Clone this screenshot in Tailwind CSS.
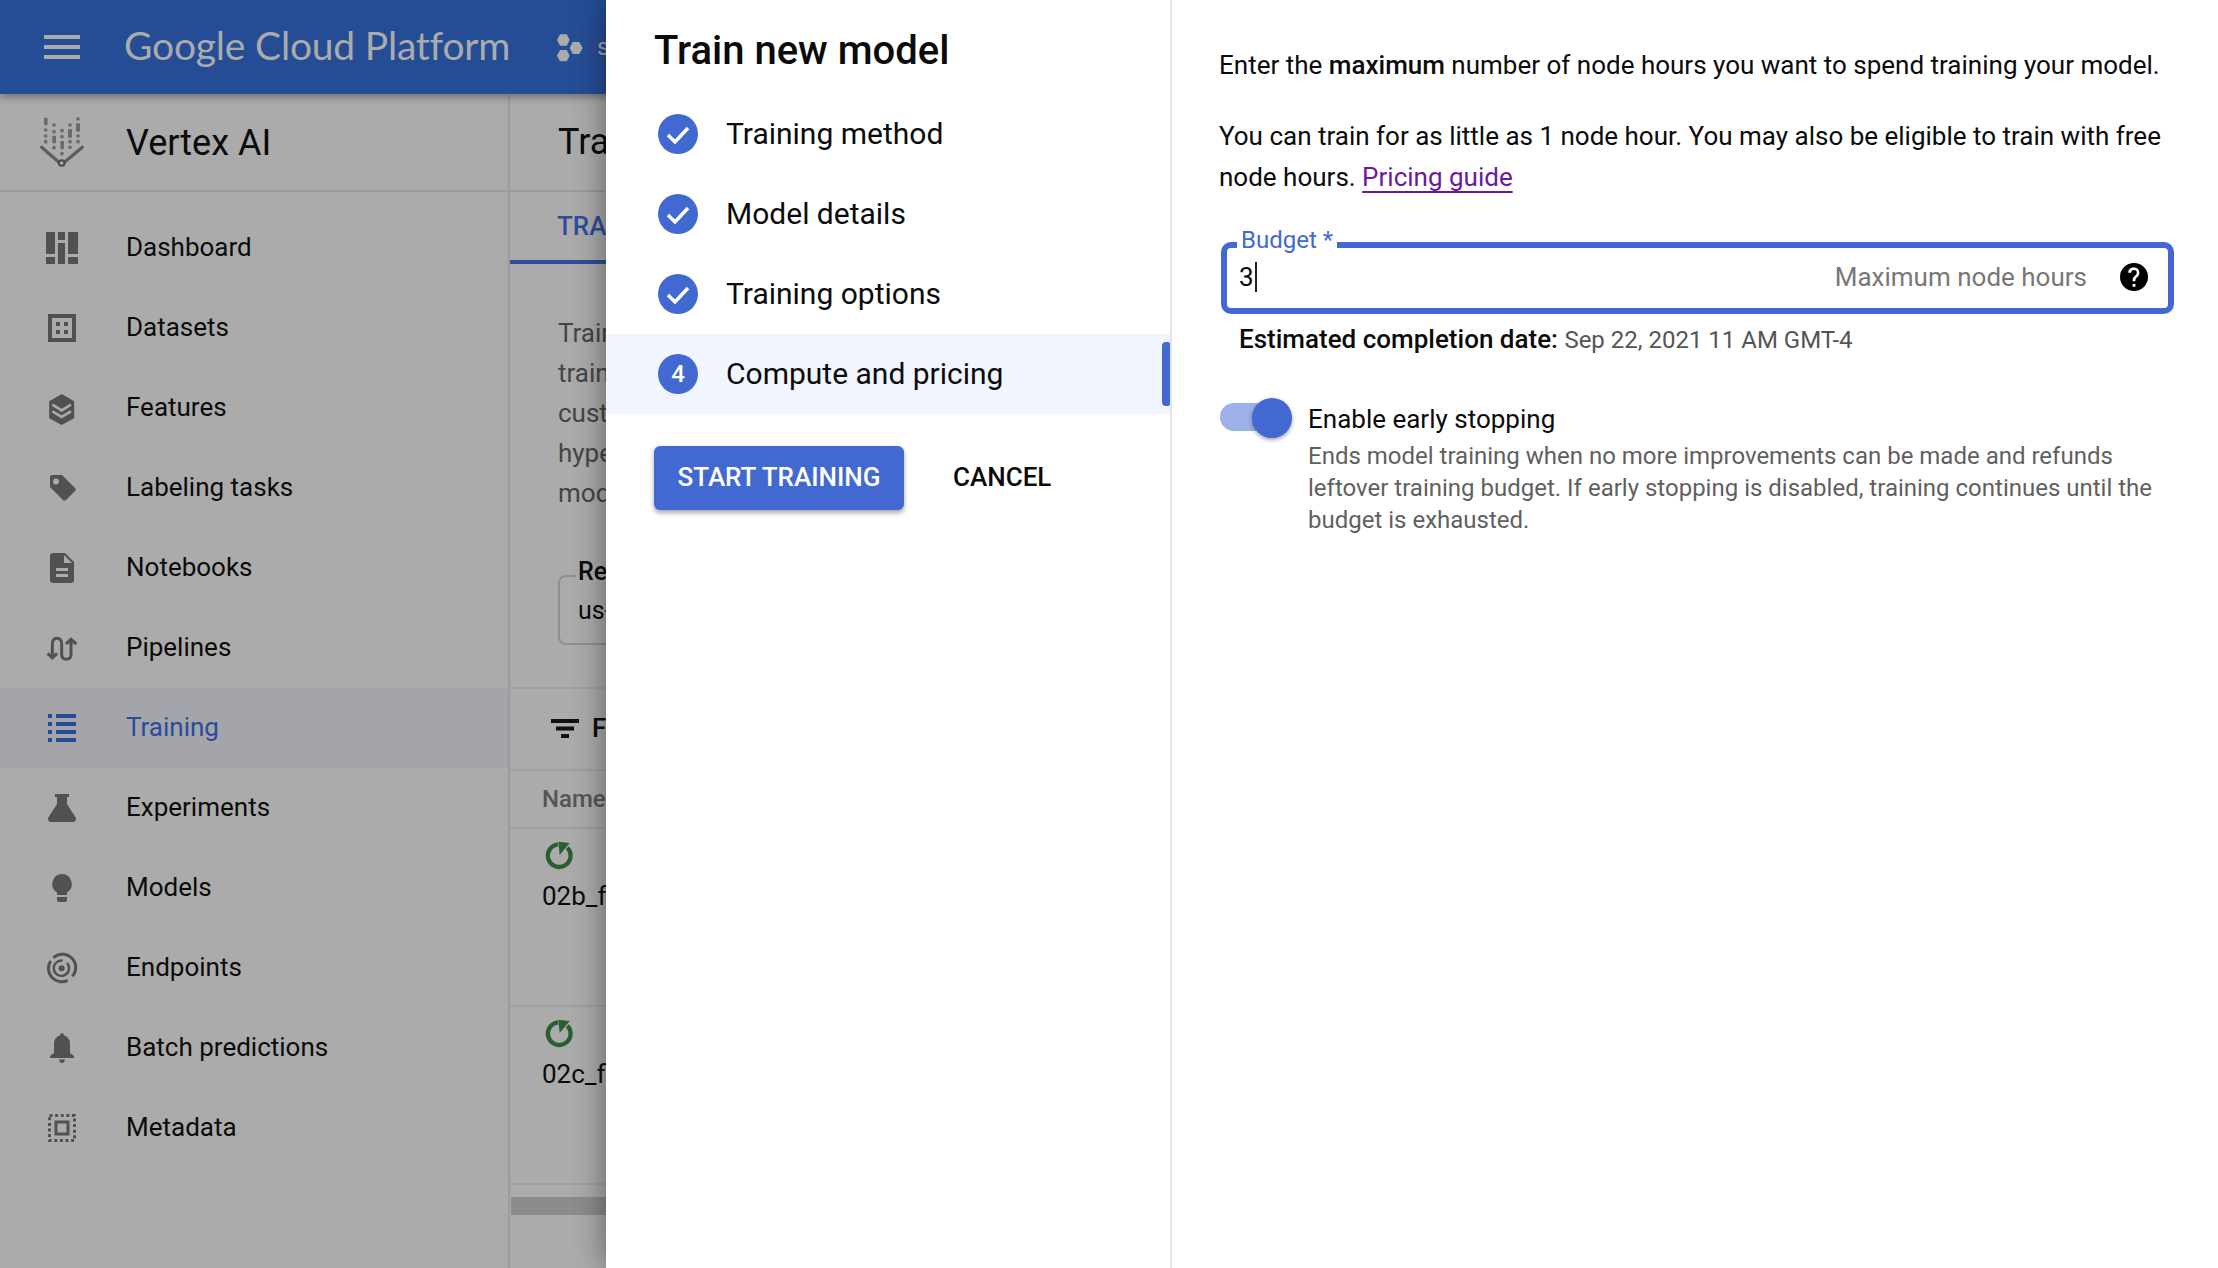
<!DOCTYPE html>
<html lang="en">

<head>
  <meta charset="UTF-8">
  <title>Vertex AI - Train new model</title>
  <script src="https://cdn.jsdelivr.net/npm/@tailwindcss/browser@4"></script>
</head>

<body class="relative w-[2218px] h-[1268px] overflow-hidden bg-[#ababab] font-[Roboto,sans-serif] text-[#0b0b0b]">

  <!-- Top bar -->
  <header class="relative z-10 h-[94px] bg-[#254d96] shadow-[0_3px_8px_rgba(0,0,0,0.35)] flex items-center text-[#ababab]">
    <svg class="ml-[44px] w-[36px] h-[24px] shrink-0" viewBox="0 0 36 24" fill="#ababab">
      <rect width="36" height="4" /><rect y="10" width="36" height="4" /><rect y="20" width="36" height="4" />
    </svg>
    <span class="ml-[44px] mb-[3px] w-[386px] shrink-0 text-[39px] font-[Lato,sans-serif] tracking-[-0.2px] whitespace-nowrap">Google Cloud Platform</span>
    <svg class="ml-[30px] w-[66px] h-[55px] shrink-0" viewBox="0 0 198 165" fill="#ababab">
      <polygon points="51,60 60,43 80,43 89,60 80,77 60,77" />
      <polygon points="89,84 98,66 118,66 128,84 118,102 98,102" />
      <polygon points="51,107 60,90 80,90 89,107 80,124 60,124" />
    </svg>
    <span class="-ml-[9px] text-[24px]">s</span>
  </header>

  <div class="flex h-[1174px]">
    <!-- Sidebar -->
    <aside class="w-[510px] shrink-0 border-r-2 border-[#9c9c9c]">
      <div class="h-[98px] border-b-2 border-[#9c9c9c] flex items-center pl-[30px]">
        <svg class="-mt-[4px] w-[70px] h-[70px] shrink-0" viewBox="0 0 210 210" fill="#6a6a6a">
          <rect x="42" y="38" width="11" height="23" rx="3" /><circle cx="47" cy="75" r="5.500" /><circle cx="47" cy="93" r="5.500" /><circle cx="47" cy="110" r="5.500" />
          <circle cx="72" cy="60" r="5.500" /><circle cx="72" cy="80" r="5.500" /><rect x="67" y="92" width="11" height="23" rx="3" /><circle cx="72" cy="128" r="5.500" />
          <circle cx="96" cy="77" r="5.500" /><circle cx="96" cy="95" r="5.500" /><rect x="91" y="108" width="11" height="25" rx="3" /><circle cx="96" cy="146" r="5.500" />
          <circle cx="120" cy="60" r="5.500" /><rect x="114" y="72" width="12" height="26" rx="3" /><circle cx="120" cy="110" r="5.500" /><circle cx="120" cy="127" r="5.500" />
          <circle cx="144" cy="42" r="5.500" /><rect x="138" y="55" width="12" height="25" rx="3" /><circle cx="144" cy="93" r="5.500" /><circle cx="144" cy="110" r="5.500" />
          <path d="M35 127L85 170M157 127L105 170" fill="none" stroke="#5e5e5e" stroke-width="10" stroke-linecap="round" />
          <circle cx="95" cy="174" r="8.500" fill="none" stroke="#4a4a4a" stroke-width="6" />
        </svg>
        <span class="ml-[26px] mt-[1px] text-[36px]">Vertex AI</span>
      </div>
      <nav class="pt-[16px] text-[26px] [&_span]:mb-[2px]">
        <a class="h-[80px] flex items-center">
          <svg class="ml-[46px] w-[32px] h-[32px] shrink-0" viewBox="0 0 32 32" fill="#515151">
            <rect width="9" height="22" /><rect x="12" width="7" height="8" /><rect x="22" width="10" height="22" />
            <rect x="12" y="11" width="7" height="21" /><rect y="25" width="9" height="7" /><rect x="22" y="25" width="10" height="7" />
          </svg>
          <span class="ml-[48px]">Dashboard</span>
        </a>
        <a class="h-[80px] flex items-center">
          <svg class="ml-[48px] w-[28px] h-[28px] shrink-0" viewBox="0 0 28 28" fill="#515151">
            <path fill-rule="evenodd" d="M0 0H28V28H0ZM4 4V24H24V4Z" />
            <rect x="8" y="8" width="4" height="4" /><rect x="16" y="8" width="4" height="4" /><rect x="8" y="16" width="4" height="4" /><rect x="16" y="16" width="4" height="4" />
          </svg>
          <span class="ml-[50px]">Datasets</span>
        </a>
        <a class="h-[80px] flex items-center">
          <svg class="ml-[35px] w-[55px] h-[55px] shrink-0" viewBox="0 0 165 165">
            <path d="M80 42L115 62V110L80 129L45 110V62Z" fill="#515151" stroke="#515151" stroke-width="5" stroke-linejoin="round" />
            <path d="M52 71L80 88L108 71M52 91L80 108L108 91" fill="none" stroke="#ababab" stroke-width="8" />
          </svg>
          <span class="ml-[36px]">Features</span>
        </a>
        <a class="h-[80px] flex items-center">
          <svg class="ml-[50px] w-[26px] h-[26px] shrink-0" viewBox="0 0 26 26" fill="#515151">
            <path fill-rule="evenodd" d="M2 0H12L26 14Q26 15 25 16L16 25Q14 26 13 25L0 12V2Q0 0 2 0ZM6 3.500A3 3 0 1 0 6 9.500A3 3 0 1 0 6 3.500Z" />
          </svg>
          <span class="ml-[50px]">Labeling tasks</span>
        </a>
        <a class="h-[80px] flex items-center">
          <svg class="ml-[50px] w-[24px] h-[30px] shrink-0" viewBox="0 0 24 30" fill="#515151">
            <path fill-rule="evenodd" d="M3 0H15L24 9V27Q24 30 21 30H3Q0 30 0 27V3Q0 0 3 0ZM6 15V18H18V15ZM6 21V24H18V21ZM14 2V10H22Z" />
          </svg>
          <span class="ml-[52px]">Notebooks</span>
        </a>
        <a class="h-[80px] flex items-center">
          <svg class="ml-[35px] w-[55px] h-[55px] shrink-0" viewBox="0 0 165 165" fill="none" stroke="#515151" stroke-width="9">
            <path d="M52 110V70Q52 52 66 52Q80 52 80 70V100Q80 115 94 115Q108 115 108 100V58" />
            <path d="M38 97L52 111L66 97M93 69L108 55L124 69" />
          </svg>
          <span class="ml-[36px]">Pipelines</span>
        </a>
        <a class="h-[80px] flex items-center bg-[#a4a5aa] text-[#2b4b9b]">
          <svg class="ml-[48px] w-[28px] h-[28px] shrink-0" viewBox="0 0 28 28" fill="#254d96">
            <rect width="4" height="4" /><rect x="8" width="20" height="4" />
            <rect y="8" width="4" height="4" /><rect x="8" y="8" width="20" height="4" />
            <rect y="16" width="4" height="4" /><rect x="8" y="16" width="20" height="4" />
            <rect y="24" width="4" height="4" /><rect x="8" y="24" width="20" height="4" />
          </svg>
          <span class="ml-[50px]">Training</span>
        </a>
        <a class="h-[80px] flex items-center">
          <svg class="ml-[48px] w-[28px] h-[28px] shrink-0" viewBox="0 0 28 28" fill="#515151">
            <path d="M7 0H21V3H19V10L28 24Q28 28 25 28H3Q0 28 0 24L9 10V3H7Z" />
          </svg>
          <span class="ml-[50px]">Experiments</span>
        </a>
        <a class="h-[80px] flex items-center">
          <svg class="ml-[52px] w-[20px] h-[28px] shrink-0" viewBox="0 0 20 28" fill="#515151">
            <path d="M10 0A10 10 0 0 1 15 18.500V21H5V18.500A10 10 0 0 1 10 0Z" />
            <path d="M5 23H15V26Q15 28 13 28H7Q5 28 5 26Z" />
          </svg>
          <span class="ml-[54px]">Models</span>
        </a>
        <a class="h-[80px] flex items-center">
          <svg class="ml-[35px] w-[55px] h-[55px] shrink-0" viewBox="0 0 165 165" fill="none" stroke="#515151">
            <path d="M55 50A40 40 0 0 1 112 106M98 118A40 40 0 0 1 47 60" stroke-width="9" />
            <path d="M96 66A23 23 0 1 1 83 59" stroke-width="7" />
            <circle cx="80" cy="82" r="9" fill="#515151" stroke="none" />
          </svg>
          <span class="ml-[36px]">Endpoints</span>
        </a>
        <a class="h-[80px] flex items-center">
          <svg class="ml-[50px] w-[24px] h-[30px] shrink-0" viewBox="0 0 24 30" fill="#515151">
            <path d="M12 0Q14 0 14 2.500Q20 4 20 11V20L24 23V25H0V23L4 20V11Q4 4 10 2.500Q10 0 12 0Z" />
            <path d="M9 26.500H15Q14.500 30 12 30Q9.500 30 9 26.500Z" />
          </svg>
          <span class="ml-[52px]">Batch predictions</span>
        </a>
        <a class="h-[80px] flex items-center">
          <svg class="ml-[48px] w-[28px] h-[28px] shrink-0" viewBox="0 0 28 28" fill="none" stroke="#515151">
            <rect x="1.500" y="1.500" width="25" height="25" stroke-width="3" stroke-dasharray="3 2.600" />
            <rect x="8" y="8" width="12" height="12" stroke-width="3" />
          </svg>
          <span class="ml-[50px]">Metadata</span>
        </a>
      </nav>
    </aside>

    <!-- Page behind the panel, cut off by it -->
    <main class="flex-1 min-w-0 overflow-hidden">
      <div class="h-[98px] border-b-2 border-[#9c9c9c] flex items-center pl-[48px] text-[36px] whitespace-nowrap">Training</div>
      <div class="h-[72px] border-b-2 border-[#a0a0a0] flex">
        <div class="w-[200px] h-[72px] pl-[47px] border-b-4 border-[#2f4d9b] flex items-center text-[26px] font-medium text-[#2f4d9b] whitespace-nowrap">TRAINING PIPELINES</div>
      </div>
      <div class="h-[425px] border-b-2 border-[#a0a0a0] pl-[48px] pt-[49px]">
        <p class="text-[26px] leading-[40px] text-[#454545] whitespace-nowrap">Train<br>train<br>custom<br>hyper<br>model</p>
        <div class="mt-[62px] w-[300px] h-[70px] border-2 border-[#8f8f8f] rounded-[8px] pl-[16px] text-[25px] leading-[39px] whitespace-nowrap">
          <p class="-mt-[25px] w-fit px-[2px] bg-[#ababab] font-medium">Region</p>
          <p class="px-[2px]">us-central1</p>
        </div>
      </div>
      <div class="h-[82px] border-b-2 border-[#a0a0a0] flex items-center pl-[41px] pb-[2px] font-medium text-[26px]">
        <svg class="w-[28px] h-[19px] shrink-0" viewBox="0 0 28 19" fill="#111">
          <rect width="28" height="4" /><rect x="5" y="7.500" width="18" height="4" /><rect x="10" y="15" width="8" height="4" />
        </svg>
        <span class="ml-[13px]">Filter</span>
      </div>
      <div class="h-[58px] border-b-2 border-[#a0a0a0] flex items-center pl-[32px] text-[24px] font-medium text-[#555]">Name</div>
      <div class="h-[178px] border-b-2 border-[#a0a0a0] pl-[32px] text-[26px]">
        <svg class="-ml-[8px] w-[55px] h-[55px]" viewBox="0 0 165 165" fill="none">
          <path d="M100 56A34 34 0 1 1 72 46" stroke="#2a5e30" stroke-width="13" />
          <path d="M73 38L107 42L77 78Z" fill="#2a5e30" />
        </svg>
        <p class="-mt-[7px]">02b_flowers</p>
      </div>
      <div class="h-[178px] border-b-2 border-[#a0a0a0] pl-[32px] text-[26px]">
        <svg class="-ml-[8px] w-[55px] h-[55px]" viewBox="0 0 165 165" fill="none">
          <path d="M100 56A34 34 0 1 1 72 46" stroke="#2a5e30" stroke-width="13" />
          <path d="M73 38L107 42L77 78Z" fill="#2a5e30" />
        </svg>
        <p class="-mt-[7px]">02c_flowers</p>
      </div>
      <div class="mt-[12px] ml-[1px] h-[18px] bg-[#8c8c8c]"></div>
    </main>
  </div>

  <!-- Train new model panel -->
  <section class="absolute left-[606px] top-0 right-0 bottom-0 z-20 flex bg-white shadow-[0_0_30px_rgba(0,0,0,0.45)]">
    <div class="w-[566px] shrink-0 border-r-2 border-[#e3e4e8]">
      <h1 class="pl-[48px] pt-[26px] h-[94px] text-[40px] leading-[50px] font-medium">Train new model</h1>
      <ol class="text-[30px]">
        <li class="h-[80px] flex items-center pl-[52px]">
          <svg class="w-[40px] h-[40px] shrink-0" viewBox="0 0 40 40"><circle cx="20" cy="20" r="20" fill="#4169d1" /><path d="M10 21L17 28L30 14" fill="none" stroke="#fff" stroke-width="3.500" /></svg>
          <span class="ml-[28px] mb-[1px]">Training method</span>
        </li>
        <li class="h-[80px] flex items-center pl-[52px]">
          <svg class="w-[40px] h-[40px] shrink-0" viewBox="0 0 40 40"><circle cx="20" cy="20" r="20" fill="#4169d1" /><path d="M10 21L17 28L30 14" fill="none" stroke="#fff" stroke-width="3.500" /></svg>
          <span class="ml-[28px] mb-[1px]">Model details</span>
        </li>
        <li class="h-[80px] flex items-center pl-[52px]">
          <svg class="w-[40px] h-[40px] shrink-0" viewBox="0 0 40 40"><circle cx="20" cy="20" r="20" fill="#4169d1" /><path d="M10 21L17 28L30 14" fill="none" stroke="#fff" stroke-width="3.500" /></svg>
          <span class="ml-[28px] mb-[1px]">Training options</span>
        </li>
        <li class="relative h-[80px] flex items-center pl-[52px] bg-[#f1f5fe]">
          <span class="w-[40px] h-[40px] shrink-0 rounded-full bg-[#4169d1] text-white text-[24px] font-medium flex items-center justify-center">4</span>
          <span class="ml-[28px] mb-[1px]">Compute and pricing</span>
          <span class="absolute right-0 top-[8px] w-[8px] h-[64px] rounded-l-[4px] rounded-r-[2px] bg-[#4169d1]"></span>
        </li>
      </ol>
      <div class="mt-[32px] pl-[48px] flex items-center text-[26px] font-medium">
        <button class="w-[250px] h-[64px] pb-[2px] rounded-[6px] bg-[#4169d1] text-white shadow-[0_3px_5px_rgba(0,0,0,0.35)]">START TRAINING</button>
        <button class="ml-[49px] mb-[2px] text-[#0b0b0b]">CANCEL</button>
      </div>
    </div>

    <div class="flex-1 pl-[47px] pr-[44px] text-[26px]">
      <p class="pt-[45px] leading-[40px] whitespace-nowrap">Enter the <b class="font-medium">maximum</b> number of node hours you want to spend training your model.</p>
      <p class="mt-[31px] leading-[41px]">You can train for as little as 1 node hour. You may also be eligible to train with free node hours. <a class="text-[#6a1b9a] underline underline-offset-[5px]">Pricing guide</a></p>

      <div class="relative mt-[44px] ml-[2px] w-[953px] h-[72px] border-[6px] border-[#4169d1] rounded-[10px] flex items-center pb-[2px]">
        <span class="absolute left-[10px] -top-[23px] px-[4px] bg-white text-[24px] leading-[30px] text-[#4169d1]">Budget *</span>
        <span class="ml-[12px] border-r-2 border-[#222] pr-[1px] leading-[30px]">3</span>
        <span class="ml-auto text-[#777]">Maximum node hours</span>
        <svg class="ml-[33px] mr-[20px] w-[28px] h-[28px] shrink-0" viewBox="0 0 24 24" fill="#000">
          <path d="M12 0a12 12 0 1 0 0 24a12 12 0 1 0 0-24Zm1.200 20.400h-2.400v-2.400h2.400Zm2.500-9.300-1.100 1.100c-.9.900-1.400 1.600-1.400 3.400h-2.400v-.6c0-1.300.5-2.500 1.400-3.400l1.500-1.500c.4-.4.700-1 .7-1.700a2.400 2.400 0 0 0-4.800 0H7a4.800 4.800 0 0 1 9.600 0c0 1-.4 2-.9 2.700Z" />
        </svg>
      </div>

      <p class="mt-[10px] ml-[20px] leading-[30px] whitespace-nowrap"><b class="font-medium">Estimated completion date:</b> <span class="text-[24px] text-[#555]">Sep 22, 2021 11 AM GMT-4</span></p>

      <div class="mt-[43px] flex">
        <div class="relative w-[72px] h-[40px] shrink-0">
          <div class="absolute left-[1px] top-[5px] w-[50px] h-[28px] rounded-full bg-[#9db0e8]"></div>
          <div class="absolute left-[33px] top-0 w-[40px] h-[40px] rounded-full bg-[#4169d1] shadow-[0_2px_4px_rgba(0,0,0,0.35)]"></div>
        </div>
        <div class="ml-[17px] w-[860px] pt-[1px]">
          <p class="leading-[40px]">Enable early stopping</p>
          <p class="text-[24px] leading-[32px] pt-[1px] text-[#5f5f5f]">Ends model training when no more improvements can be made and refunds leftover training budget. If early stopping is disabled, training continues until the budget is exhausted.</p>
        </div>
      </div>
    </div>
  </section>

</body>

</html>
